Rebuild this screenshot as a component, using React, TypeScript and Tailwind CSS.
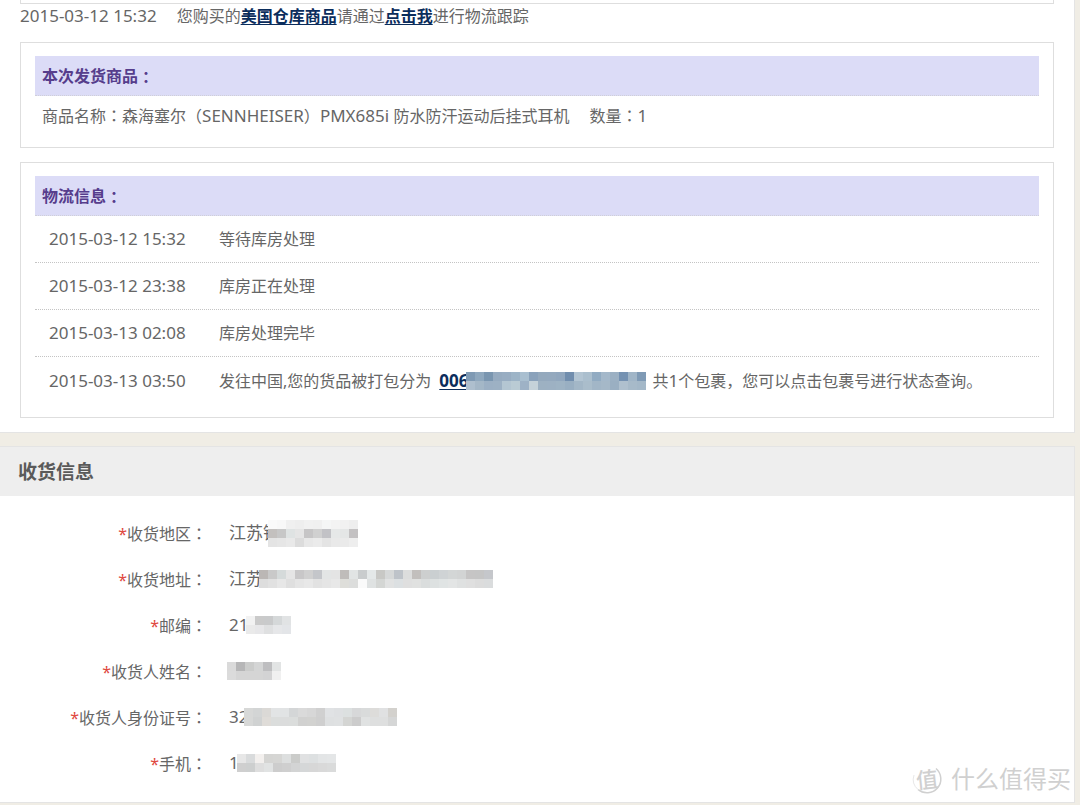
import type { ReactNode } from 'react';

const CELL = 9;

// Censored value drawn as a grid of flat tiles.
function Mosaic({ rows, className = '' }: { rows: string[]; className?: string }) {
  const grid = rows.map((row) => row.split(' '));
  const width = grid[0].length * CELL;
  const height = grid.length * CELL;
  return (
    <svg
      aria-hidden="true"
      width={width}
      height={height}
      shapeRendering="crispEdges"
      className={`relative shrink-0 ${className}`}
    >
      {grid.map((row, y) =>
        row.map((fill, x) => (
          <rect key={`${x}-${y}`} x={x * CELL} y={y * CELL} width={CELL} height={CELL} fill={`#${fill}`} />
        )),
      )}
    </svg>
  );
}

// Full-width punctuation centred in its cell.
function Mark({ children }: { children: string }) {
  return <span className="font-['Noto_Sans_CJK_TC',sans-serif]">{children}</span>;
}

function Latin({ children }: { children: string }) {
  return <span className="text-[17px]">{children}</span>;
}

function TextLink({ children }: { children: ReactNode }) {
  return (
    <a href="#track" className="font-bold text-[#0b2d5c] underline underline-offset-2">
      {children}
    </a>
  );
}

function Box({ title, className, children }: { title: string; className: string; children: ReactNode }) {
  return (
    <section className={`border border-[#dedede] px-[14px] pt-[13px] ${className}`}>
      <h3 className="flex h-10 items-center border-b border-dotted border-[#d0d0d8] bg-[#dcdcf7] px-[7px] font-bold text-[#563d8c]">
        {title}
        <Mark>：</Mark>
      </h3>
      {children}
    </section>
  );
}

const events: { time: string; text: ReactNode }[] = [
  { time: '2015-03-12 15:32', text: '等待库房处理' },
  { time: '2015-03-12 23:38', text: '库房正在处理' },
  { time: '2015-03-13 02:08', text: '库房处理完毕' },
  {
    time: '2015-03-13 03:50',
    text: (
      <>
        <span>发往中国,您的货品被打包分为</span>
        <span className="ml-2 flex items-center">
          <TextLink>
            <Latin>006</Latin>
          </TextLink>
          <Mosaic
            className="-ml-0.5"
            rows={[
              '7f9ab4 8fa8be 7a96b0 96abc0 98adc2 9db4c7 a9bfd0 8aa2bb 94a9bd 94a9be 91a7be 718eae b3c5d3 abbfce 91abc2 a4b8ca 9bb0c3 7592b2 a0b5c7 7f9ab5',
              'aebfce a4b7c7 9cb0c4 9db1c4 b4c6d2 bacbd4 9eb2c6 c5d2d9 9db1c2 9db1c3 9eb3c4 99afc2 a3b7c7 aabdcb a2b6c7 a5b8c8 9aafc2 afc0ce a7bac9 a4b8c8',
            ]}
          />
        </span>
        <span className="ml-1.5">
          共<Latin>1</Latin>个包裹，您可以点击包裹号进行状态查询。
        </span>
      </>
    ),
  },
];

const fields: { label: string; value: string; mosaic: string[]; className: string }[] = [
  {
    label: '收货地区',
    value: '江苏镇',
    className: '-ml-3',
    mosaic: [
      'fafafa f8f8f8 f0f0f0 eeeeee f1f1f1 f0f0f0 f5f6f6 f3f3f3 f1f1f1 eeeeee',
      'c3c0be c7c7c7 dfe3e3 e5e5e5 c6c5c6 d0d0d0 c2c2c6 e6e8e8 e4e6e6 c3c1c2',
      'e4e4e4 e6e6e6 e9e9e9 dcdcdc e8e8e8 ebebeb e4e4e4 e9e9e9 eaeaea eeeeee',
    ],
  },
  {
    label: '收货地址',
    value: '江苏',
    className: '-ml-1',
    mosaic: [
      'bbb7b5 c9c9c9 d5dada e5e5e5 c8c7c8 d0d0d0 c4c6ca e3e5e5 e4e4e4 bfbcba e1e4e4 c9cccd e4e8e8 c8c8c5 d6d8d8 bec3c9 dcdddd c2bfbd cdcfcf cacfd1 cfd3d5 d3d6d6 d2d4d4 c6c5c5 c5c5c5 c5c7cb',
      'dddddd e1e1e1 e7e7e7 dfdfdf e5e5e5 e8e8e8 e2e2e2 e5e5e5 e8e8e8 dededa dcdddc fafafa dfe2e2 d4d6d4 e1e2e2 dce0e2 dfdfdf e0e1e0 dadddd dde1e1 e0e4e4 e3e5e5 dfe1e1 dfdfdf dcdcdc dadcdd',
    ],
  },
  {
    label: '邮编',
    value: '21',
    className: '-ml-0.5',
    mosaic: [
      'f2f2f2 cacaca c9cacb d5d8d9 e1e3e4',
      'eaeaea e7e7e9 dfe0e1 e6e7e9 e3e5e8',
    ],
  },
  {
    label: '收货人姓名',
    value: '',
    className: '-ml-0.5',
    mosaic: [
      'dadada b6b6b7 cbcccb d4d5d5 bebec0 e2e4e4',
      'dbdbdb d5d5d5 d5d5d5 d5d5d5 d3d3d4 f0f0f0',
    ],
  },
  {
    label: '收货人身份证号',
    value: '32',
    className: '-ml-1',
    mosaic: [
      'd7d8d7 d3d5d5 dbd9d6 e2e4e5 e1e3e4 d4d6d7 dadada d7d7d7 d0d0d0 e0e2e4 dee0e2 dce0e0 d7d8d9 d9dbdb dddcda e0e1e2 d3d1cd',
      'd7d8d7 d0d2d2 dfdcd8 dbdddc dbdcdc dbdddc d1d1d0 d2d2d0 cfcfcf dee0e1 dfe1e2 d4d5d3 cccccc e0e2e2 dedfdf dedfdf d5d6d6',
    ],
  },
  {
    label: '手机',
    value: '1',
    className: '-ml-0.5',
    mosaic: [
      'e7e7e7 d9dbdc f3f0ee d5d5d3 d6d6d4 dddfdf cbccca e0e1e2 dde0e1 e3e5e6 e4e6e7',
      'cfcfcf cdcfcf dedede e1e3e3 cdcdcd cfcfcf d3d4d4 d5d7d8 d7d7d7 d9d9d9 dadbdb',
    ],
  },
];

function Watermark() {
  return (
    <div className="absolute right-[9px] bottom-[9px] flex items-center gap-2 text-[24px] leading-9 text-[#d0d0d0]">
      <span className="relative flex size-8 items-center justify-center text-[22px] font-medium leading-none">
        <svg aria-hidden="true" viewBox="0 0 32 32" fill="none" className="absolute inset-0 size-8">
          <path d="M25 5.5A13.5 13.5 0 0 1 7 26.5" stroke="#d0d0d0" strokeWidth="1.5" />
          <path d="M7 26.5A13.5 13.5 0 0 1 3 12" stroke="#e8e8e8" />
        </svg>
        <span className="-rotate-6">值</span>
      </span>
      <span>什么值得买</span>
    </div>
  );
}

export default function App() {
  return (
    <div className="relative bg-[#f0ede5] pb-[3px] font-['Noto_Sans','Noto_Sans_CJK_SC',sans-serif] text-[16px] leading-6 text-[#666666]">
      <main className="mr-[5px]">
        <section className="border-r border-b border-[#e4e4e4] bg-white pr-[20px] pb-[14px] pl-[20px]">
          <div className="h-1 border-x border-b border-[#dedede]" />
          <p className="flex h-6 items-center gap-5">
            <time className="text-[17px]">2015-03-12 15:32</time>
            <span>
              您购买的<TextLink>美国仓库商品</TextLink>请通过<TextLink>点击我</TextLink>进行物流跟踪
            </span>
          </p>

          <Box title="本次发货商品" className="mt-[14px] pb-[13px]">
            <p className="flex h-[38px] items-center gap-5 px-[7px]">
              <span>
                商品名称<Mark>：</Mark>森海塞尔<Mark>（</Mark>
                <Latin>SENNHEISER</Latin>
                <Mark>）</Mark>
                <Latin>PMX685i </Latin>防水防汗运动后挂式耳机
              </span>
              <span>
                数量<Mark>：</Mark>
                <Latin>1</Latin>
              </span>
            </p>
          </Box>

          <Box title="物流信息" className="mt-[14px] pb-[13px]">
            <ul className="divide-y divide-dotted divide-[#c4c4c4]">
              {events.map((event) => (
                <li key={event.time} className="flex h-[47px] items-center px-[14px]">
                  <time className="w-[170px] text-[17px]">{event.time}</time>
                  <div className="flex items-center">{event.text}</div>
                </li>
              ))}
            </ul>
          </Box>
        </section>

        <section className="mt-[13px] border-t border-r border-b border-[#e4e4e4] bg-white pb-[16px]">
          <h2 className="flex h-[49px] items-center bg-[#eeeeee] px-[18px] text-[19px] font-bold text-[#5a5a5a]">
            收货信息
          </h2>
          <dl className="pt-[14px]">
            {fields.map((field) => (
              <div key={field.label} className="flex h-[46px] items-center">
                <dt className="w-[207px] text-right">
                  <span className="text-[#e0483e]">*</span>
                  {field.label}
                  <Mark>：</Mark>
                </dt>
                <dd className="ml-[22px] flex items-center">
                  {field.value && <span className="text-[17px]">{field.value}</span>}
                  <Mosaic rows={field.mosaic} className={field.className} />
                </dd>
              </div>
            ))}
          </dl>
        </section>
      </main>
      <Watermark />
    </div>
  );
}
